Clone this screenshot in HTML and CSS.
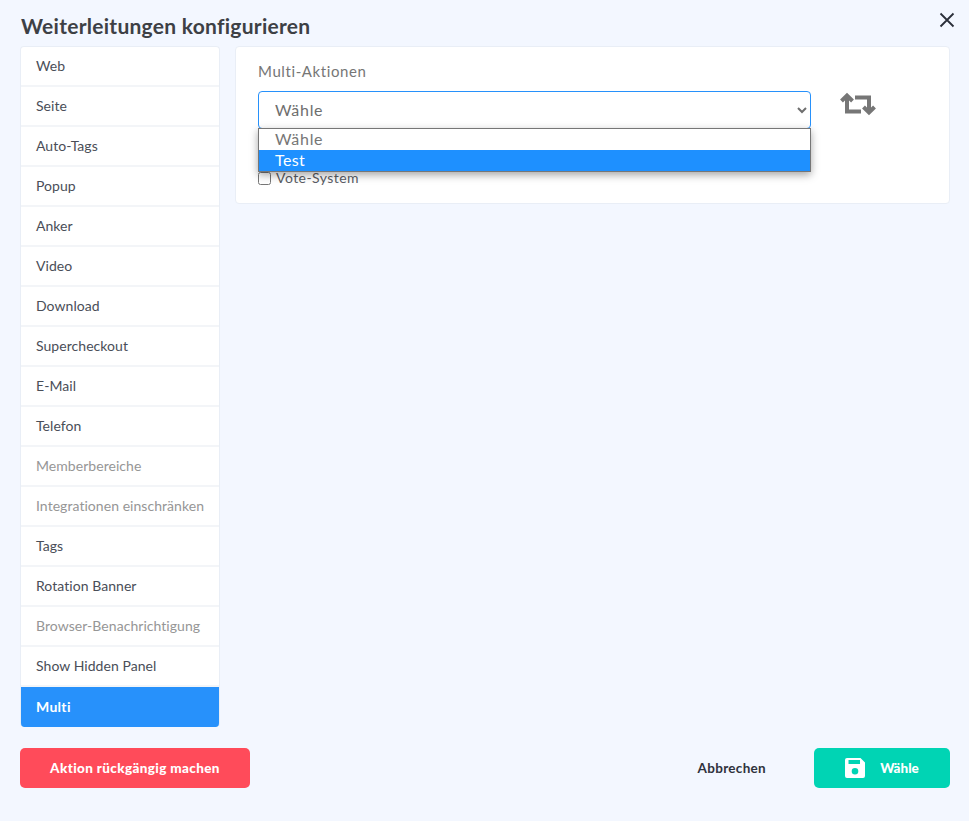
FILE: index.html
```html
<!DOCTYPE html>
<html lang="de">
<head>
<meta charset="utf-8">
<title>Weiterleitungen konfigurieren</title>
<link rel="stylesheet" href="styles.css">
</head>
<body>
<div class="modal">
  <header class="head">
    <h1 class="title">Weiterleitungen konfigurieren</h1>
    <button class="close" aria-label="Schließen">
      <svg width="16" height="16" viewBox="0 0 16 16"><path d="M1.500 1.500 14.500 14.500M14.500 1.500 1.500 14.500" fill="none" stroke="#2b2f3a" stroke-width="1.800"/></svg>
    </button>
  </header>
  <div class="body">
    <nav class="side">
      <a class="item">Web</a>
      <a class="item">Seite</a>
      <a class="item">Auto-Tags</a>
      <a class="item">Popup</a>
      <a class="item">Anker</a>
      <a class="item">Video</a>
      <a class="item">Download</a>
      <a class="item">Supercheckout</a>
      <a class="item">E-Mail</a>
      <a class="item">Telefon</a>
      <a class="item off">Memberbereiche</a>
      <a class="item off">Integrationen einschränken</a>
      <a class="item">Tags</a>
      <a class="item">Rotation Banner</a>
      <a class="item off">Browser-Benachrichtigung</a>
      <a class="item">Show Hidden Panel</a>
      <a class="item active">Multi</a>
    </nav>
    <section class="panel">
      <div class="label">Multi-Aktionen</div>
      <div class="row">
        <div class="selectwrap">
          <select class="select"><option>Wähle</option></select>
          <ul class="popup">
            <li class="opt">Wähle</li>
            <li class="opt sel">Test</li>
          </ul>
        </div>
        <svg class="swap" width="36" height="24" viewBox="0 0 36 24">
          <g fill="none" stroke="#767676" stroke-width="4">
            <path d="M7 5V19.500H21"/>
            <path d="M1.500 9 7 3.500 12.500 9"/>
            <path d="M15 5.500H29V20"/>
            <path d="M23.500 15 29 20.500 34.500 15"/>
          </g>
        </svg>
      </div>
      <label class="check"><input type="checkbox" class="box"><span>Vote-System</span></label>
    </section>
  </div>
  <footer class="foot">
    <button class="btn danger">Aktion rückgängig machen</button>
    <div class="right">
      <button class="cancel">Abbrechen</button>
      <button class="btn save">
        <svg width="20" height="20" viewBox="0 0 20 20"><path fill-rule="evenodd" d="M2 0H15.500L20 4.500V18A2 2 0 0 1 18 20H2A2 2 0 0 1 0 18V2A2 2 0 0 1 2 0ZM3.500 2V6H15V2ZM10 10A3.300 3.300 0 1 0 10 16.600 3.300 3.300 0 0 0 10 10Z" fill="#fff"/></svg>
        <span>Wähle</span>
      </button>
    </div>
  </footer>
</div>
</body>
</html>
```
FILE: styles.css
```css
* { box-sizing: border-box; }
html, body { margin: 0; height: 100%; }
body {
  background: #f3f7ff;
  font-family: "Lato", "Open Sans", sans-serif;
  color: #4a4e58;
}
.modal { width: 969px; height: 821px; padding: 0 19px 0 20px; }
.head { height: 46px; display: flex; justify-content: space-between; align-items: flex-start; }
.title {
  margin: 13px 0 0 1px;
  font-size: 21px;
  line-height: 26px;
  font-weight: 700;
  color: #3d4045;
  letter-spacing: 0.27px;
}
.close { margin: 12px -5px 0 0; padding: 0; border: 0; background: none; width: 16px; height: 16px; }
.body { display: flex; gap: 15px; align-items: flex-start; }
.side {
  width: 200px;
  display: flex;
  flex-direction: column;
  background: #fff;
  border: 1px solid #e9eef6;
  border-bottom: 0;
  border-radius: 4px;
  overflow: hidden;
}
.item {
  height: 40px;
  padding: 0 0 2px 15px;
  display: flex;
  align-items: center;
  font-size: 14px;
  color: #4a4e58;
  border-bottom: 2px solid #f3f5f8;
  letter-spacing: 0.05px;
}
.item.off { color: #969696; }
.item.active {
  margin: 0 -1px;
  padding: 0 0 2px 16px;
  background: #2791fb;
  color: #fff;
  font-weight: 700;
  border-bottom: 0;
  border-radius: 0 0 4px 4px;
  letter-spacing: 0.3px;
}
.panel {
  flex: 1;
  height: 158px;
  padding: 14px 22px;
  background: #fff;
  border: 1px solid #e9eef6;
  border-radius: 4px;
}
.label { font-size: 15px; line-height: 20px; color: #767676; letter-spacing: 0.6px; }
.row { margin-top: 10px; display: flex; align-items: flex-start; gap: 29px; }
.selectwrap { position: relative; width: 553px; }
.select {
  display: block;
  width: 553px;
  height: 38px;
  padding: 0 12px 2px;
  font: inherit;
  font-size: 16px;
  color: #6e6e6e;
  background: #fff;
  border: 1px solid #2791fb;
  border-radius: 4px;
  outline: 0;
  letter-spacing: 0.7px;
}
.popup {
  position: absolute;
  top: 37px;
  left: 0;
  right: 0;
  margin: 0;
  padding: 0;
  list-style: none;
  background: #fff;
  border: 1px solid #767676;
  box-shadow: 0 3px 8px rgba(0, 0, 0, 0.35);
}
.opt { height: 21px; padding-left: 16px; font-size: 16px; line-height: 19px; color: #767676; letter-spacing: 0.7px; }
.opt.sel { background: #1e90ff; color: #fff; letter-spacing: 0.4px; }
.swap { margin-top: 1px; }
.check { margin-top: 41px; display: flex; align-items: center; gap: 5px; font-size: 14px; line-height: 16px; color: #5a5d64; letter-spacing: 0.45px; }
.box { margin: 0; width: 13px; height: 13px; }
.foot { margin-top: 21px; display: flex; justify-content: space-between; align-items: center; }
.right { display: flex; align-items: center; gap: 48px; }
.btn {
  height: 40px;
  border: 0;
  border-radius: 5px;
  color: #fff;
  font: 900 13.500px "Lato", sans-serif;
  display: flex;
  align-items: center;
  justify-content: center;
}
.danger { width: 230px; background: #ff4b5a; letter-spacing: 0.37px; }
.save { width: 136px; gap: 15px; background: #00d4b4; }
.cancel { margin-left: -3px; padding: 0; border: 0; background: none; font: 700 13.500px "Lato", sans-serif; color: #2f323c; letter-spacing: 0.3px; }
```
